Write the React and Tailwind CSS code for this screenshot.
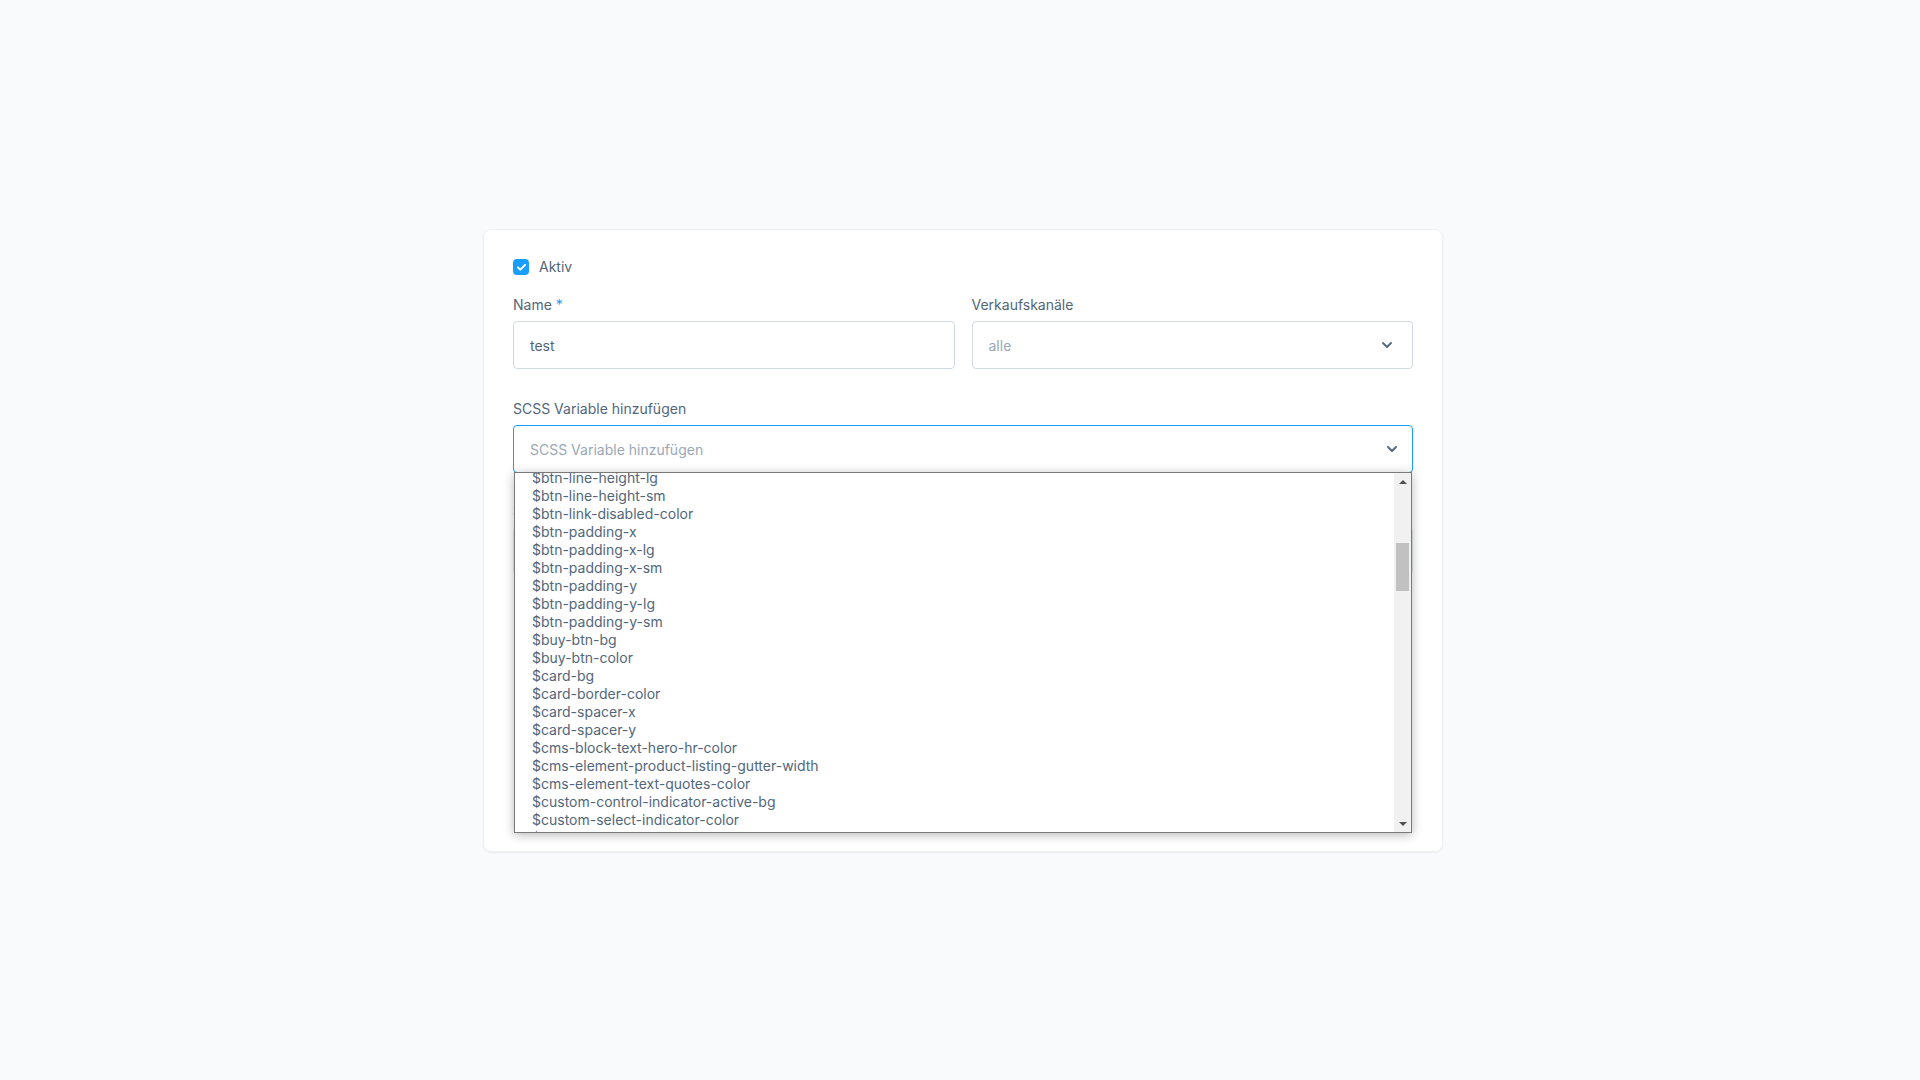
import React from 'react';

const variables = [
  '$btn-line-height-lg',
  '$btn-line-height-sm',
  '$btn-link-disabled-color',
  '$btn-padding-x',
  '$btn-padding-x-lg',
  '$btn-padding-x-sm',
  '$btn-padding-y',
  '$btn-padding-y-lg',
  '$btn-padding-y-sm',
  '$buy-btn-bg',
  '$buy-btn-color',
  '$card-bg',
  '$card-border-color',
  '$card-spacer-x',
  '$card-spacer-y',
  '$cms-block-text-hero-hr-color',
  '$cms-element-product-listing-gutter-width',
  '$cms-element-text-quotes-color',
  '$custom-control-indicator-active-bg',
  '$custom-select-indicator-color',
  '$custom-select-indicator-disabled-color',
];

function Chevron() {
  return (
    <svg width="10" height="6" viewBox="0 0 10 6" fill="none">
      <path d="M1 1l4 4 4-4" stroke="#52667a" strokeWidth="1.8" strokeLinecap="round" strokeLinejoin="round" />
    </svg>
  );
}

function Field({ label, required, children }) {
  return (
    <div className="flex flex-col">
      <label className="text-[14px] leading-[20px] text-[#52667a] mb-[6px]">
        {label}
        {required && <span className="text-[#189eff]"> *</span>}
      </label>
      {children}
    </div>
  );
}

function Input({ value, placeholder, faint }) {
  return (
    <div
      className={`h-[48px] rounded-[4px] border bg-white px-[16px] flex items-center text-[14px] ${
        faint ? 'border-[#e3e8ec]' : 'border-[#d1d9e0]'
      }`}
    >
      {value ? <span className="text-[#52667a]">{value}</span> : <span className="text-[#9aa8b5]">{placeholder}</span>}
    </div>
  );
}

function Select({ value, focused, chevronPad = 'pr-[20px]' }) {
  return (
    <div
      className={`h-[48px] rounded-[4px] border bg-white pl-[16px] ${chevronPad} flex items-center justify-between text-[14px] ${
        focused ? 'border-[#189eff]' : 'border-[#d1d9e0]'
      }`}
    >
      <span className="text-[#9aa8b5]">{value}</span>
      <Chevron />
    </div>
  );
}

// native <select> popup look-alike
function DropdownList() {
  return (
    <div className="absolute left-[1px] right-[1px] top-[47px] h-[361px] bg-white border border-[#7a7a7a] shadow-[0_2px_10px_rgba(0,0,0,0.28)] flex z-10">
      <div className="flex-1 overflow-hidden">
        <ul className="mt-[-4px]">
          {variables.map((v) => (
            <li key={v} className="h-[18px] leading-[18px] pl-[17px] text-[14px] text-[#52667a] whitespace-nowrap">
              {v}
            </li>
          ))}
        </ul>
      </div>
      <div className="w-[17px] bg-[#f1f1f1] flex flex-col items-center">
        <div className="h-[17px] flex items-center justify-center">
          <div className="w-0 h-0 border-l-[4px] border-r-[4px] border-b-[4px] border-l-transparent border-r-transparent border-b-[#505050]" />
        </div>
        <div className="h-[53px]" />
        <div className="w-[13px] h-[48px] bg-[#c1c1c1]" />
        <div className="flex-1" />
        <div className="h-[17px] flex items-center justify-center">
          <div className="w-0 h-0 border-l-[4px] border-r-[4px] border-t-[4px] border-l-transparent border-r-transparent border-t-[#505050]" />
        </div>
      </div>
    </div>
  );
}

export default function App() {
  return (
    <div className="min-h-screen bg-[#f9fafb] flex justify-center pt-[229px] pl-[6px] font-['Inter',sans-serif]">
      <div className="w-[960px] h-[623px] bg-white rounded-[8px] border border-[#eef1f4] shadow-[0_1px_2px_rgba(0,0,0,0.06)] px-[29px] pt-[29px]">
        {/* Aktiv */}
        <div className="flex items-center gap-[10px] h-[16px]">
          <div className="w-[16px] h-[16px] rounded-[4px] bg-[#189eff] flex items-center justify-center">
            <svg width="9" height="7" viewBox="0 0 9 7" fill="none">
              <path d="M1 3.5l2.3 2.2L8 1" stroke="white" strokeWidth="1.9" strokeLinecap="round" strokeLinejoin="round" />
            </svg>
          </div>
          <span className="text-[14px] leading-[16px] text-[#52667a]">Aktiv</span>
        </div>

        <div className="grid grid-cols-2 gap-x-[17px] mt-[20px]">
          <Field label="Name" required>
            <Input value="test" />
          </Field>
          <Field label="Verkaufskanäle">
            <Select value="alle" />
          </Field>
        </div>

        <div className="mt-[30px]">
          <Field label="SCSS Variable hinzufügen">
            <div className="relative">
              <Select value="SCSS Variable hinzufügen" focused chevronPad="pr-[15px]" />
              <DropdownList />
            </div>
          </Field>
        </div>

        {/* fields hidden behind the open list */}
        <div className="grid grid-cols-2 gap-x-[17px] gap-y-[20px] mt-[28px]">
          <Field label="$btn-padding-x">
            <Input value="1rem" faint />
          </Field>
          <Field label="$card-bg">
            <Input value="#fff" faint />
          </Field>
        </div>
      </div>
    </div>
  );
}
